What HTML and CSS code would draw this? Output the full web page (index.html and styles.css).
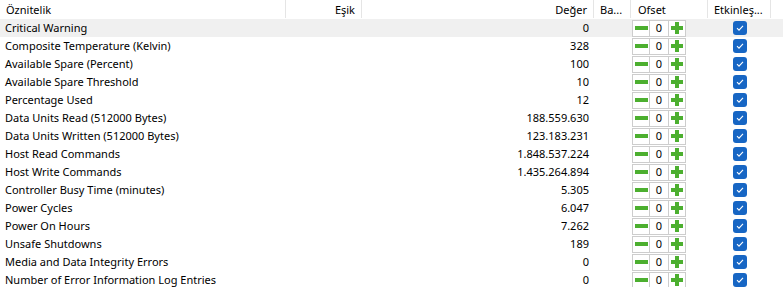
FILE: index.html
```html
<!DOCTYPE html>
<html>
<head>
<meta charset="utf-8">
<link rel="stylesheet" href="styles.css">
</head>
<body>
<div class="table">
  <div class="row head">
    <div class="c c1">Öznitelik</div>
    <div class="c c2 r">Eşik</div>
    <div class="c c3 r">Değer</div>
    <div class="c c4">Ba...</div>
    <div class="c c5">Ofset</div>
    <div class="c c6">Etkinleş...</div>
    <div class="c c7"></div>
  </div>
  <div id="rows"></div>
</div>
<script src="app.js"></script>
</body>
</html>
```
FILE: styles.css
```css
html, body { margin: 0; padding: 0; background: #fff; }
body { font-family: "Noto Sans", "Open Sans", sans-serif; font-size: 11px; color: #000; }
.table { width: 783px; }
.row { display: grid; grid-template-columns: 286px 76px 232px 37px 77px 63px 12px; height: 18px; align-items: center; }
.row.head { height: 18px; margin-bottom: 1px; }
.row.sel { background: #f0f0f0; }
.c { padding: 0 5px 1px 5px; white-space: nowrap; overflow: hidden; height: 100%; display: flex; align-items: center; box-sizing: border-box; }
.c.r { justify-content: flex-end; }
.head .c { border-right: 1px solid #e5e5e5; padding-left: 6px; padding-bottom: 0; }
.head .c7 { border-right: none; }
.head .c5 { padding-left: 7px; }
.head .c2 { padding-right: 6px; }
.head .c3 { padding-right: 6px; }
.val { padding-right: 5px; }
.c5b { padding: 0 0 0 1px; }
.ofs { display: flex; height: 17px; }
.btn, .num { box-sizing: border-box; border: 1px solid #cdcdcd; height: 17px; display: flex; align-items: center; justify-content: center; background: #fff; }
.btn { width: 18px; }
.num { width: 18px; border-left: none; border-right: none; padding-bottom: 1px; }
.minus { width: 13px; height: 4px; background: #4caf2f; }
.plus { width: 12px; height: 12px; }
.c6b { padding: 0 0 0 25px; }
.chk { width: 14px; height: 14px; border-radius: 3px; background: #1766c4; display: flex; align-items: center; justify-content: center; }
```
FILE: app.js
```js
var data = [
  ["Critical Warning","0"],
  ["Composite Temperature (Kelvin)","328"],
  ["Available Spare (Percent)","100"],
  ["Available Spare Threshold","10"],
  ["Percentage Used","12"],
  ["Data Units Read (512000 Bytes)","188.559.630"],
  ["Data Units Written (512000 Bytes)","123.183.231"],
  ["Host Read Commands","1.848.537.224"],
  ["Host Write Commands","1.435.264.894"],
  ["Controller Busy Time (minutes)","5.305"],
  ["Power Cycles","6.047"],
  ["Power On Hours","7.262"],
  ["Unsafe Shutdowns","189"],
  ["Media and Data Integrity Errors","0"],
  ["Number of Error Information Log Entries","0"]
];
var html = "";
data.forEach(function (d, i) {
  html += '<div class="row' + (i === 0 ? ' sel' : '') + '">' +
    '<div class="c c1">' + d[0] + '</div>' +
    '<div class="c c2"></div>' +
    '<div class="c c3 r val">' + d[1] + '</div>' +
    '<div class="c c4"></div>' +
    '<div class="c c5b"><div class="ofs">' +
      '<div class="btn"><div class="minus"></div></div>' +
      '<div class="num">0</div>' +
      '<div class="btn"><svg class="plus" viewBox="0 0 12 12"><path d="M4 0h4v4h4v4H8v4H4V8H0V4h4z" fill="#4caf2f"/></svg></div>' +
    '</div></div>' +
    '<div class="c c6b"><div class="chk"><svg width="10" height="10" viewBox="0 0 10 10"><path d="M2 5.2l2 2 4-4.4" fill="none" stroke="#fff" stroke-width="1.1"/></svg></div></div>' +
    '<div class="c c7"></div>' +
  '</div>';
});
document.getElementById("rows").innerHTML = html;
```
